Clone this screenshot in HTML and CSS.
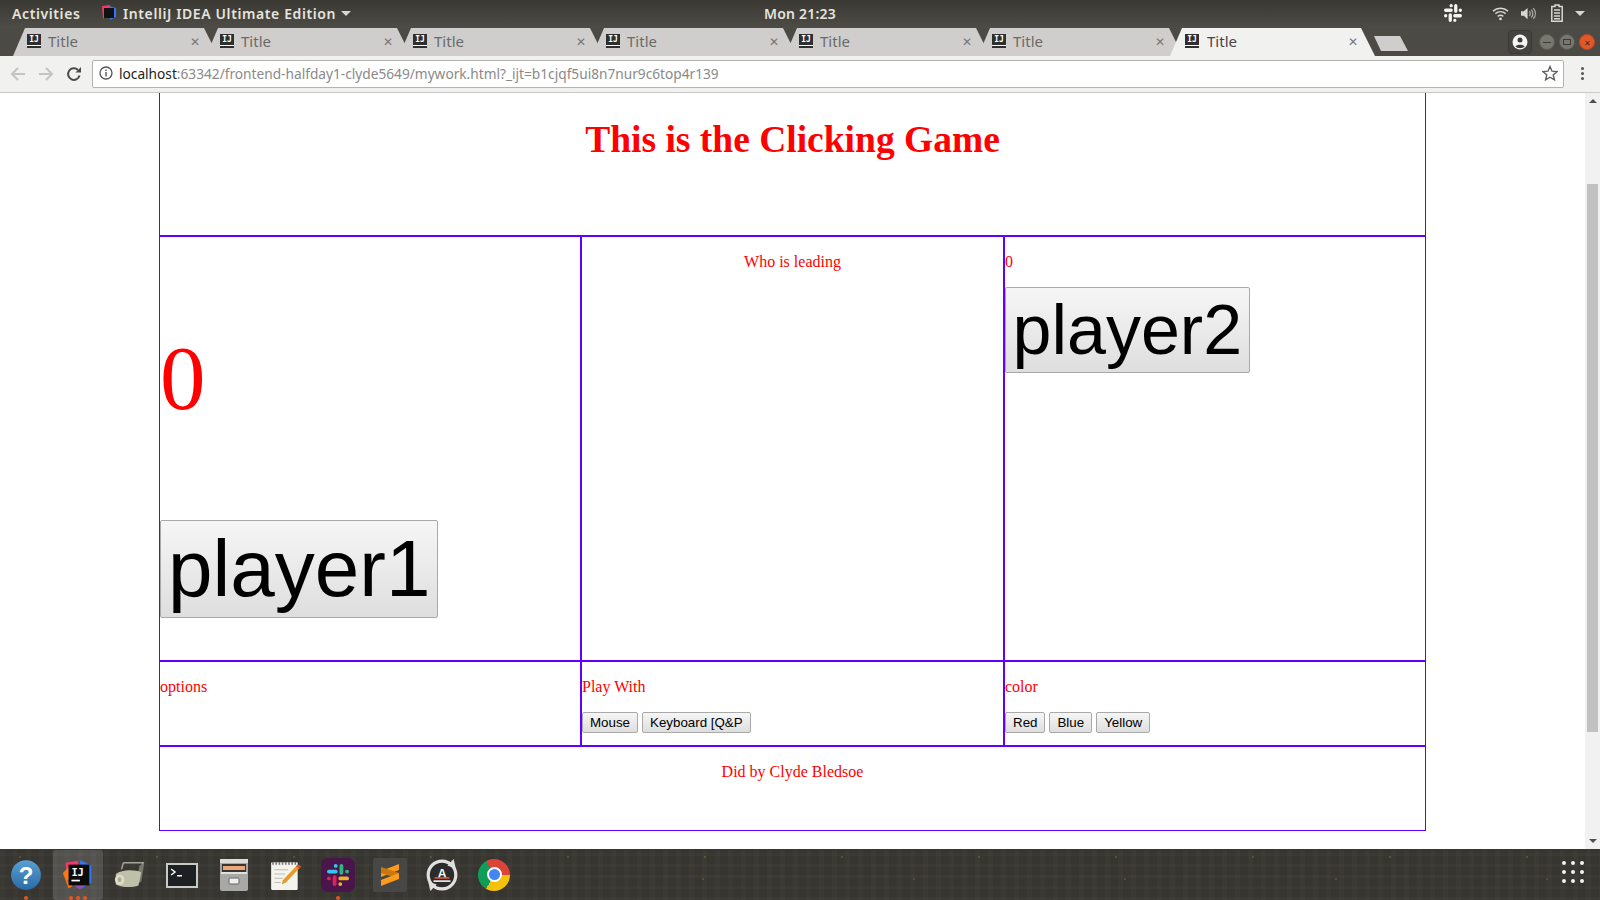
FILE: index.html
```html
<!DOCTYPE html>
<html lang="en">
<head>
    <meta charset="UTF-8">
    <title>Title</title>
    <link rel="stylesheet" href="styles.css">
</head>
<body>
    <div class="screen">
        <div class="topbar">
            <div class="topbar-left">
                <span class="activities">Activities</span>
                <svg class="app-icon" viewBox="0 0 16 16"><polygon points="1,1 9,0 10,6 2,14" fill="#f0386b"/><polygon points="8,1 15,3 15,12 9,15" fill="#2f7bf5"/><rect x="3" y="3" width="10" height="10" fill="#111"/></svg>
                <span class="app-name">IntelliJ IDEA Ultimate Edition</span>
                <span class="caret"></span>
            </div>
            <div class="clock">Mon 21:23</div>
            <div class="topbar-right">
                <svg class="tray-slack" viewBox="0 0 24 24" fill="none" stroke="#f4f4f2" stroke-width="3.6" stroke-linecap="round"><path d="M4 9h6M10 4v.01M15 4v6M20 9v.01M14 15h6M14 20v.01M9 14v6M4 15v.01"/></svg>
                <svg class="tray-wifi" viewBox="0 0 18 16" fill="none" stroke="#d8d7d3" stroke-width="1.6"><path d="M1 5.5c4.5-4 11.5-4 16 0M3.5 8.2c3.2-2.7 7.8-2.7 11 0M6 11c1.800-1.400 4.200-1.400 6 0"/><circle cx="9" cy="13.800" r="1.500" fill="#d8d7d3" stroke="none"/></svg>
                <svg class="tray-volume" viewBox="0 0 18 16" fill="none" stroke="#b9b8b3" stroke-width="1.200"><polygon points="1,5.500 4,5.500 8,2 8,14 4,10.500 1,10.500" fill="#d8d7d3" stroke="none"/><path d="M10 5.500c1 1.500 1 3.500 0 5M12 3.800c2 2.500 2 6 0 8.400M14.200 2.200c2.800 3.500 2.800 8.200 0 11.600"/></svg>
                <svg class="tray-battery" viewBox="0 0 14 18" fill="none" stroke="#d8d7d3" stroke-width="1.500"><path d="M5 1h4v1.500h3.200v14.700H1.800V2.500H5z"/><path d="M4 6h6M4 9h6M4 12h6M4 14.800h6"/></svg>
                <span class="caret tray-caret"></span>
            </div>
        </div>

        <div class="tabbar">
            <div class="tabs">
                <div class="tab"><span class="ij">IJ</span><span class="tab-title">Title</span><span class="tab-close">&#10005;</span></div>
                <div class="tab"><span class="ij">IJ</span><span class="tab-title">Title</span><span class="tab-close">&#10005;</span></div>
                <div class="tab"><span class="ij">IJ</span><span class="tab-title">Title</span><span class="tab-close">&#10005;</span></div>
                <div class="tab"><span class="ij">IJ</span><span class="tab-title">Title</span><span class="tab-close">&#10005;</span></div>
                <div class="tab"><span class="ij">IJ</span><span class="tab-title">Title</span><span class="tab-close">&#10005;</span></div>
                <div class="tab"><span class="ij">IJ</span><span class="tab-title">Title</span><span class="tab-close">&#10005;</span></div>
                <div class="tab active"><span class="ij">IJ</span><span class="tab-title">Title</span><span class="tab-close">&#10005;</span></div>
                <div class="new-tab"></div>
            </div>
            <div class="window-controls">
                <div class="profile"><svg viewBox="0 0 16 16"><circle cx="8" cy="8" r="7.500" fill="#f5f5f3"/><circle cx="8" cy="6" r="2.500" fill="#3e3c37"/><path d="M3.500 12.500c1-2.500 8-2.500 9 0-2 2-7 2-9 0z" fill="#3e3c37"/></svg></div>
                <div class="win-btn"><span class="win-min"></span></div>
                <div class="win-btn"><span class="win-max"></span></div>
                <div class="win-btn close">&#10005;</div>
            </div>
        </div>

        <div class="toolbar">
            <svg class="nav-icon" viewBox="0 0 16 16" fill="none" stroke="#c4c4c2" stroke-width="2"><path d="M15 8H2M8 2 2 8l6 6"/></svg>
            <svg class="nav-icon" viewBox="0 0 16 16" fill="none" stroke="#c4c4c2" stroke-width="2"><path d="M1 8h13M8 2l6 6-6 6"/></svg>
            <svg class="nav-icon" viewBox="0 0 16 16" fill="none" stroke="#4a4a4a" stroke-width="2"><path d="M13.500 9.500A5.800 5.800 0 1 1 12 4"/><polygon points="9.500,6.500 15,6.500 15,1" fill="#4a4a4a" stroke="none"/></svg>
            <div class="omnibox">
                <svg class="info-icon" viewBox="0 0 14 14"><circle cx="7" cy="7" r="6" fill="none" stroke="#555" stroke-width="1.300"/><rect x="6.300" y="6" width="1.400" height="4.500" fill="#555"/><rect x="6.300" y="3.500" width="1.400" height="1.500" fill="#555"/></svg>
                <span class="url"><span class="url-host">localhost</span>:63342/frontend-halfday1-clyde5649/mywork.html?_ijt=b1cjqf5ui8n7nur9c6top4r139</span>
                <svg class="star-icon" viewBox="0 0 16 16"><polygon points="8,1.500 10,6.200 15,6.600 11.200,9.900 12.400,14.800 8,12.200 3.600,14.800 4.800,9.900 1,6.600 6,6.200" fill="none" stroke="#5f5f5f" stroke-width="1.400"/></svg>
            </div>
            <div class="menu-dots"><span></span><span></span><span></span></div>
        </div>

        <div class="viewport">
            <div class="page">
                <div class="board">
                    <div class="row row-title">
                        <h1>This is the Clicking Game</h1>
                    </div>
                    <div class="row row-game">
                        <div class="cell">
                            <p class="score">0</p>
                            <button class="btn-player1">player1</button>
                        </div>
                        <div class="cell center">
                            <p>Who is leading</p>
                        </div>
                        <div class="cell">
                            <p>0</p>
                            <button class="btn-player2">player2</button>
                        </div>
                    </div>
                    <div class="row row-options">
                        <div class="cell">
                            <p>options</p>
                        </div>
                        <div class="cell">
                            <p>Play With</p>
                            <button>Mouse</button>
                            <button>Keyboard [Q&amp;P</button>
                        </div>
                        <div class="cell">
                            <p>color</p>
                            <button>Red</button>
                            <button>Blue</button>
                            <button>Yellow</button>
                        </div>
                    </div>
                    <div class="row row-footer">
                        <p>Did by Clyde Bledsoe</p>
                    </div>
                </div>
            </div>
            <div class="scrollbar">
                <span class="arrow-up"></span>
                <div class="thumb"></div>
                <span class="arrow-down"></span>
            </div>
        </div>

        <div class="dock">
            <div class="dock-item">
                <svg viewBox="0 0 32 32"><defs><linearGradient id="help-fill" x1="0" y1="0" x2="0" y2="1"><stop offset="0" stop-color="#5a9fd6"/><stop offset="1" stop-color="#2a6ba6"/></linearGradient></defs><circle cx="16" cy="16" r="14" fill="url(#help-fill)"/><text x="16" y="24" class="help-mark">?</text></svg>
                <span class="dot"></span>
            </div>
            <div class="dock-item hover">
                <svg viewBox="0 0 36 36"><polygon points="5,5 18,3 20,14 6,26" fill="#f0386b"/><polygon points="20,2 32,8 32,26 22,32" fill="#2f7bf5"/><polygon points="2,16 10,8 12,30 8,32" fill="#f97a12"/><polygon points="6,24 20,33 26,28 12,20" fill="#9b4fb5"/><rect x="8" y="7" width="22" height="22" fill="#0b0b0b"/><text x="11" y="19" class="ij-mark">IJ</text><rect x="11" y="23" width="9" height="1.800" fill="#fff"/></svg>
                <span class="dot d1"></span><span class="dot d2"></span><span class="dot d3"></span>
            </div>
            <div class="dock-item">
                <svg viewBox="0 0 36 32"><path d="M11 3h21l-4 8M11 3l-2 7" fill="none" stroke="#a5a59b" stroke-width="1.500"/><path d="M28 6l5-2-3 19-6 4z" fill="#77776e"/><path d="M3 15c6-5 20-5 27-2l-3 14c-8 3-18 2-24-1z" fill="#bfc0a8"/><ellipse cx="7" cy="21" rx="5" ry="5.500" fill="#dcdcc8"/><ellipse cx="7" cy="21" rx="2" ry="2.500" fill="#a9a992"/></svg>
            </div>
            <div class="dock-item">
                <svg viewBox="0 0 34 30"><rect x="1" y="3" width="32" height="25" fill="#c9c9c7"/><rect x="3" y="5" width="28" height="21" fill="#1d2023"/><path d="M6 9l4 3-4 3" fill="none" stroke="#fff" stroke-width="1.500"/><rect x="12" y="15" width="5" height="1.500" fill="#fff"/></svg>
            </div>
            <div class="dock-item">
                <svg viewBox="0 0 32 34"><rect x="2" y="1" width="28" height="32" rx="2" fill="#a8a8a6"/><rect x="2" y="1" width="28" height="4" fill="#dcdcda"/><rect x="4" y="6" width="24" height="10" fill="#3b3532"/><rect x="5" y="8" width="22" height="4" fill="#e8a877"/><rect x="3" y="14" width="26" height="2" fill="#e0e0de"/><rect x="11" y="20" width="10" height="6" rx="1" fill="#eee" stroke="#666"/></svg>
            </div>
            <div class="dock-item">
                <svg viewBox="0 0 32 32"><rect x="2" y="4" width="25" height="26" rx="1" fill="#f4f3ec"/><path d="M3 5h23" stroke="#777" stroke-width="2.500" stroke-dasharray="1.500 1.500"/><path d="M5 11h13M5 15h10M5 19h8M5 23h6" stroke="#bbb" stroke-width="1"/><path d="M27 6l3 2-14 15-4 2 1-4z" fill="#e89a2c"/><path d="M27 6l3 2-1.500 2-3-2z" fill="#d64a3a"/></svg>
            </div>
            <div class="dock-item">
                <svg viewBox="0 0 30 30"><rect width="30" height="30" rx="6" fill="#4a154b"/><g transform="translate(3 3)" fill="none" stroke-width="3.400" stroke-linecap="round"><path d="M4 9h6M10 4v.01" stroke="#36c5f0"/><path d="M15 4v6M20 9v.01" stroke="#2eb67d"/><path d="M14 15h6M14 20v.01" stroke="#ecb22e"/><path d="M9 14v6M4 15v.01" stroke="#e01e5a"/></g></svg>
                <span class="dot"></span>
            </div>
            <div class="dock-item">
                <svg viewBox="0 0 34 34"><rect width="34" height="34" rx="2" fill="#474745"/><polygon points="8,13 26,6 26,12 8,19" fill="#ff9a1a"/><polygon points="8,15 26,21 26,15 8,9" fill="#c9770f"/><polygon points="8,22 26,15 26,21 8,28" fill="#ff9a1a"/></svg>
            </div>
            <div class="dock-item">
                <svg viewBox="0 0 32 32"><circle cx="16" cy="16" r="13" fill="#2b2b2b" stroke="#e0e0de" stroke-width="3"/><polygon points="27,1 29,10 21,7" fill="#e0e0de"/><polygon points="5,31 3,22 11,25" fill="#e0e0de"/><text x="16" y="19" class="update-mark">A</text><rect x="9" y="18" width="14" height="1.500" fill="#e8553a"/><rect x="8" y="21" width="16" height="1.500" fill="#f4f4f2"/></svg>
            </div>
            <div class="dock-item">
                <div class="chrome-logo"><span></span></div>
            </div>
        </div>
        <div class="apps-grid">
            <span></span><span></span><span></span>
            <span></span><span></span><span></span>
            <span></span><span></span><span></span>
        </div>
    </div>
</body>
</html>
```

FILE: styles.css
```css
:root {
    --line: #6200ff;
    --tab: #cfcecc;
    --tab-active: #f1f1ef;
    --chrome-dark: #4c4a44;
}

*, *::before, *::after {
    box-sizing: border-box;
}

html, body {
    margin: 0;
    height: 100%;
    overflow: hidden;
}

.screen {
    position: relative;
    width: 1600px;
    height: 900px;
    display: flex;
    flex-direction: column;
    font-family: "Liberation Serif", serif;
}

/* ----- Desktop top bar ----- */
.topbar {
    height: 28px;
    flex: none;
    display: grid;
    grid-template-columns: 1fr auto 1fr;
    align-items: center;
    padding-bottom: 2px;
    background: linear-gradient(#3a3833, #4e4c46);
    color: #e6e4de;
    font-family: "Noto Sans", sans-serif;
    font-size: 14px;
    font-weight: 600;
}

.topbar-left {
    display: flex;
    align-items: center;
    padding-left: 12px;
}

.activities {
    width: 89px;
    letter-spacing: 0.6px;
}

.app-icon {
    width: 16px;
    height: 16px;
    margin-right: 6px;
}

.app-name {
    letter-spacing: 0.6px;
}

.caret {
    width: 0;
    height: 0;
    margin-left: 5px;
    border-left: 5px solid transparent;
    border-right: 5px solid transparent;
    border-top: 5px solid #d8d7d3;
}

.clock {
    letter-spacing: 0.2px;
}

.topbar-right {
    display: flex;
    align-items: center;
    justify-content: flex-end;
    padding-right: 15px;
}

.tray-slack {
    width: 22px;
    height: 22px;
    margin-right: 28px;
}

.tray-wifi {
    width: 17px;
    height: 15px;
    margin-right: 11px;
}

.tray-volume {
    width: 17px;
    height: 15px;
    margin-right: 13px;
}

.tray-battery {
    width: 14px;
    height: 18px;
    margin-right: 11px;
}

.tray-caret {
    margin-left: 0;
}

/* ----- Browser tabs ----- */
.tabbar {
    height: 28px;
    flex: none;
    display: flex;
    justify-content: space-between;
    background: var(--chrome-dark);
    font-family: "Noto Sans", sans-serif;
}

.tabs {
    display: flex;
    padding-left: 13px;
}

.tab {
    position: relative;
    width: 205px;
    margin-right: -12px;
    display: flex;
    align-items: center;
    padding: 0 18px 2px 14px;
    background: var(--tab);
    clip-path: polygon(0 100%, 12px 0, 191px 0, 205px 100%);
    color: #6b6a68;
    font-size: 15px;
}

.tab.active {
    z-index: 1;
    width: 205px;
    margin-left: -1px;
    padding-left: 15px;
    padding-right: 17px;
    background: var(--tab-active);
    color: #45454d;
}

.tab.active .ij {
    margin-right: 8px;
}

.ij {
    width: 14px;
    height: 14px;
    margin-right: 7px;
    background: #2f2f2f;
    color: #fff;
    font-family: "DejaVu Sans Mono", monospace;
    font-size: 8px;
    font-weight: 700;
    line-height: 11px;
    text-align: center;
    flex: none;
    border-bottom: 2px solid #2f2f2f;
    box-shadow: inset 0 -1px 0 #fff;
}

.tab-title {
    flex: 1;
}

.tab-close {
    font-size: 12px;
    color: #777;
}

.new-tab {
    width: 34px;
    height: 15px;
    margin: 8px 0 0 11px;
    background: var(--tab);
    clip-path: polygon(0 0, 26px 0, 100% 100%, 7px 100%);
}

.window-controls {
    display: flex;
    align-items: flex-start;
    padding: 2px 5px 0 0;
    gap: 4px;
}

.profile {
    width: 24px;
    height: 24px;
    margin-right: 3px;
    padding: 3px;
    border: 1px solid #3c3a35;
    border-radius: 4px;
    background: #45433e;
    display: flex;
}

.win-btn {
    width: 16px;
    height: 16px;
    margin-top: 4px;
    border-radius: 50%;
    background: #77766f;
    border: 1px solid #5b5a54;
    display: flex;
    align-items: center;
    justify-content: center;
    font-size: 8px;
    color: #3a2a20;
}

.win-btn.close {
    background: #e2572a;
    border-color: #c24820;
}

.win-min {
    width: 8px;
    height: 1px;
    background: #3c3b37;
}

.win-max {
    width: 8px;
    height: 6px;
    border: 1px solid #3c3b37;
}

/* ----- Browser toolbar ----- */
.toolbar {
    height: 37px;
    flex: none;
    display: flex;
    align-items: center;
    padding: 0 10px 1px;
    gap: 12px;
    background: var(--tab-active);
    border-bottom: 1px solid #c9c9c7;
}

.nav-icon {
    width: 16px;
    height: 16px;
    flex: none;
}

.omnibox {
    flex: 1;
    height: 28px;
    margin: 0 -2px 0 -2px;
    display: flex;
    align-items: center;
    padding: 0 5px 1px 6px;
    background: #fff;
    border: 1px solid #b4b4b2;
    border-radius: 2px;
}

.info-icon {
    width: 14px;
    height: 14px;
    margin-right: 6px;
}

.url {
    flex: 1;
    color: #8a8a8a;
    font-family: "Noto Sans", sans-serif;
    font-size: 13.7px;
}

.url-host {
    color: #222;
}

.star-icon {
    width: 16px;
    height: 16px;
}

.menu-dots {
    width: 16px;
    display: flex;
    flex-direction: column;
    align-items: center;
    gap: 2px;
}

.menu-dots span {
    width: 3px;
    height: 3px;
    border-radius: 50%;
    background: #555;
}

/* ----- Page content ----- */
.viewport {
    height: 756px;
    flex: none;
    display: flex;
    background: #fff;
}

.page {
    flex: 1;
    overflow: hidden;
}

.board {
    width: 1267px;
    margin: 0 auto;
    border: 1px solid var(--line);
    border-top: none;
    color: #f00;
    font-size: 16px;
}

.board p {
    margin: 16px 0;
}

.row {
    display: grid;
    grid-template-columns: 420px 423px 1fr;
    border-top: 2px solid var(--line);
}

.row-title {
    display: block;
    height: 142px;
    border-top: none;
    text-align: center;
}

h1 {
    margin: 0;
    padding-top: 25px;
    font-size: 37.5px;
    line-height: 44px;
}

.row-game {
    height: 425px;
}

.row-options {
    height: 85px;
}

.row-footer {
    display: block;
    height: 85px;
    text-align: center;
}

.cell + .cell {
    border-left: 2px solid var(--line);
    padding-left: 0;
}

.center {
    text-align: center;
}

.board .score {
    margin: 87px 0 86px;
    font-size: 91px;
    line-height: 110px;
}

button {
    height: 21px;
    margin: 0;
    padding: 1px 7px;
    vertical-align: top;
    border: 1px solid #a9a9a9;
    border-radius: 2px;
    background: linear-gradient(#f6f6f6, #dedede);
    color: #000;
    font-family: "Liberation Sans", sans-serif;
    font-size: 13.333px;
}

.btn-player1 {
    height: 98px;
    font-size: 80px;
    display: block;
}

.btn-player2 {
    height: 86px;
    padding: 1px 6.5px;
    font-size: 70px;
    display: block;
}

/* ----- Scrollbar ----- */
.scrollbar {
    position: relative;
    width: 15px;
    flex: none;
    background: #f1f1f1;
    display: flex;
    flex-direction: column;
    align-items: center;
    padding: 6px 0;
}

.arrow-up, .arrow-down {
    width: 0;
    height: 0;
    border-left: 4px solid transparent;
    border-right: 4px solid transparent;
}

.arrow-up {
    border-bottom: 4px solid #505050;
}

.arrow-down {
    border-top: 4px solid #505050;
}

.thumb {
    width: 11px;
    height: 548px;
    margin: 81px 0 auto;
    background: #c1c1c1;
}

/* ----- Dock ----- */
.dock {
    height: 51px;
    flex: 1;
    display: flex;
    gap: 2px;
    align-items: center;
    padding-left: 1px;
    background-color: #373530;
    background-image:
        radial-gradient(circle at 20px 8px, #8a6230 0, transparent 1.5px),
        radial-gradient(circle at 70px 30px, #7d5a2c 0, transparent 1.5px),
        repeating-linear-gradient(90deg, rgba(255, 255, 255, 0.018) 0 5px, transparent 5px 13px),
        repeating-linear-gradient(0deg, rgba(255, 255, 255, 0.018) 0 3px, transparent 3px 11px);
    background-size: 137px 51px, 211px 51px, auto, auto;
}

.dock-item {
    position: relative;
    width: 50px;
    height: 50px;
    display: flex;
    align-items: center;
    justify-content: center;
}

.dock-item svg {
    width: 34px;
    height: 34px;
}

.dock-item.hover {
    background: rgba(255, 255, 255, 0.14);
    border-radius: 3px;
}

.dot {
    position: absolute;
    left: 23px;
    bottom: 0;
    width: 4px;
    height: 4px;
    border-radius: 50%;
    background: #e95420;
}

.dot.d1 {
    left: 16px;
}

.dot.d3 {
    left: 30px;
}

.help-mark {
    fill: #fff;
    font-family: "Liberation Sans", sans-serif;
    font-size: 23px;
    font-weight: 700;
    text-anchor: middle;
}

.ij-mark {
    fill: #fff;
    font-family: "DejaVu Sans Mono", monospace;
    font-size: 11px;
    font-weight: 700;
}

.update-mark {
    fill: #f4f4f2;
    font-family: "Liberation Sans", sans-serif;
    font-size: 12px;
    font-weight: 700;
    text-anchor: middle;
}

.chrome-logo {
    width: 32px;
    height: 32px;
    display: flex;
    align-items: center;
    justify-content: center;
    border-radius: 50%;
    background: conic-gradient(#db4437 0 90deg, #f4c20d 90deg 210deg, #0f9d58 210deg 330deg, #db4437 330deg);
}

.chrome-logo span {
    width: 15px;
    height: 15px;
    border-radius: 50%;
    background: #4285f4;
    border: 2px solid #fff;
}

.apps-grid {
    position: absolute;
    right: 16px;
    bottom: 17px;
    display: grid;
    grid-template-columns: repeat(3, 4px);
    gap: 5px;
}

.apps-grid span {
    width: 4px;
    height: 4px;
    border-radius: 50%;
    background: #f2f2f2;
}
```
